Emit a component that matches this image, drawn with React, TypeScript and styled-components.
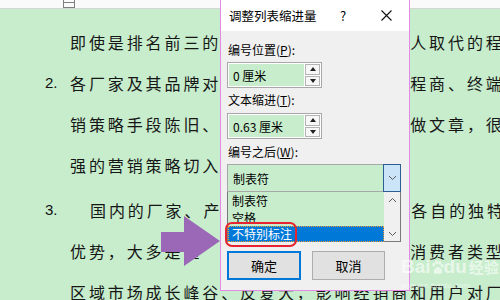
import React from 'react';
import styled, { createGlobalStyle } from 'styled-components';

const GREEN = '#c7edcc';
const UI_FONT = `"Noto Sans CJK SC", "Noto Sans", sans-serif`;

const GlobalStyle = createGlobalStyle`
  html, body {
    margin: 0;
    padding: 0;
  }
  body {
    width: 500px;
    height: 300px;
    overflow: hidden;
    background: ${GREEN};
  }
`;

// each document line: [visible left, part behind the dialog, visible right]
type DocLine = { num: string; marker: number; parts: [string, string, string]; gap?: number };

const docLines: DocLine[] = [
  { num: '', marker: 25, parts: ['即使是排名前三的', '品牌，也随时可能被他', '人取代的程度'] },
  { num: '2.', marker: 25, parts: ['各厂家及其品牌对', '市场的定位不清，对工', '程商、终端用户'] },
  { num: '', marker: 25, parts: ['销策略手段陈旧、', '大多只在价格和促销上', '做文章，很'] },
  { num: '', marker: 25, parts: ['强的营销策略切入', '点。', ''] },
  { num: '3.', marker: 45, parts: ['国内的厂家、产', '品繁多，却未能发挥出', '各自的独特'], gap: 4 },
  { num: '', marker: 25, parts: ['优势，大多是重', '复建设，不针对细分市场', '消费者类型'] },
  { num: '', marker: 25, parts: ['区域市场成长峰谷、反复大，影响经销商和用户对厂家', '', ''] },
];

const Page = styled.div`
  position: relative;
  width: 500px;
  height: 300px;
  overflow: hidden;
  background: ${GREEN};
`;

const TopStrip = styled.div`
  height: 8px;
  background: #fafafa;
  border-bottom: 1px solid #d6d6d6;
  padding-left: 63px;
  display: flex;
`;

const RulerMark = styled.div`
  width: 10px;
  height: 7px;
  border: 1px solid #808080;
  border-top: none;
  display: flex;
  flex-direction: column;

  &::before {
    content: '';
    height: 2px;
    border-bottom: 1px solid #808080;
  }
`;

const Doc = styled.div`
  padding: 12px 0 0 45px;
  white-space: nowrap;
`;

const Line = styled.div<{ $gap?: number }>`
  display: flex;
  align-items: center;
  height: 41px;
  margin-top: ${(p) => p.$gap ?? 0}px;
`;

const Marker = styled.span<{ $w: number }>`
  width: ${(p) => p.$w}px;
  flex: none;
  font-family: "Liberation Sans", sans-serif;
  font-size: 15px;
  color: #111;
`;

const LineText = styled.span`
  font-family: ${UI_FONT};
  font-size: 16px;
  letter-spacing: 2.9px;
  color: #161616;
`;

const Covered = styled.span`
  visibility: hidden;
`;

const Dialog = styled.div`
  position: absolute;
  left: 220px;
  top: 0;
  width: 190px;
  height: 291px;
  box-sizing: border-box;
  border: 1px solid #e38ae6;
  border-top: none;
  background: #f0f0f0;
  font-family: ${UI_FONT};
  font-size: 12px;
  color: #000;
`;

const TitleBar = styled.div`
  height: 31px;
  background: #fff;
  display: flex;
  align-items: center;
  padding-left: 8px;
`;

const Title = styled.span`
  flex: 1;
  font-size: 12.5px;
`;

const TitleButton = styled.span<{ $w: number }>`
  width: ${(p) => p.$w}px;
  display: flex;
  justify-content: center;
  align-items: center;
  font-size: 13px;
`;

const Body = styled.div`
  padding: 9px 8px 0 6px;
  display: flex;
  flex-direction: column;
`;

const Label = styled.div<{ $mt?: number }>`
  height: 20px;
  line-height: 20px;
  margin-top: ${(p) => p.$mt ?? 0}px;
  padding-left: 1px;
`;

const Key = styled.span`
  text-decoration: underline;
`;

const SpinBox = styled.div<{ $mt: number }>`
  margin-top: ${(p) => p.$mt}px;
  width: 95px;
  height: 26px;
  box-sizing: border-box;
  border: 1px solid #a8a8a8;
  background: #fff;
  padding: 1px;
  display: flex;
`;

const Field = styled.div`
  flex: 1;
  background: ${GREEN};
  display: flex;
  align-items: center;
  padding-left: 4px;
  white-space: pre;
`;

const Spinner = styled.div`
  width: 15px;
  margin-left: 1px;
  display: flex;
  flex-direction: column;
  gap: 1px;
`;

const SpinBtn = styled.div<{ $down?: boolean }>`
  flex: 1;
  border: 1px solid #b4b4b4;
  background: #f7f7f7;
  display: flex;
  align-items: center;
  justify-content: center;

  &::after {
    content: '';
    border-left: 3px solid transparent;
    border-right: 3px solid transparent;
    ${(p) =>
      p.$down ? 'border-top: 4px solid #222;' : 'border-bottom: 4px solid #222;'}
  }
`;

const Combo = styled.div`
  margin-top: 2px;
  width: 174px;
  height: 28px;
  box-sizing: border-box;
  border: 1px solid #a8a8a8;
  background: ${GREEN};
  display: flex;
`;

const ComboText = styled.div`
  flex: 1;
  display: flex;
  align-items: center;
  padding-left: 5px;
`;

const ComboBtn = styled.div`
  width: 16px;
  background: #cce4f7;
  border: 1px solid #2a5f94;
  margin: -1px -1px -1px 0;
  display: flex;
  align-items: center;
  justify-content: center;
`;

const ListBox = styled.div`
  width: 174px;
  height: 50px;
  box-sizing: border-box;
  border: 1px solid #7a7a7a;
  border-top: none;
  background: ${GREEN};
  display: flex;
`;

const Items = styled.div`
  flex: 1;
  display: flex;
  flex-direction: column;
`;

const Item = styled.div<{ $selected?: boolean }>`
  height: ${(p) => (p.$selected ? 16 : 17)}px;
  line-height: ${(p) => (p.$selected ? 14 : 16)}px;
  padding-left: 3px;
  box-sizing: border-box;
  background: ${(p) => (p.$selected ? '#0078d7' : 'transparent')};
  color: ${(p) => (p.$selected ? '#fff' : '#000')};
  border: 1px dotted ${(p) => (p.$selected ? '#f0a030' : 'transparent')};
`;

const ScrollBar = styled.div`
  width: 16px;
  background: #f0f0f0;
  display: flex;
  flex-direction: column;
  justify-content: space-between;
  align-items: center;
  padding: 5px 0 4px;
`;

const Buttons = styled.div`
  margin-top: 9px;
  display: flex;
  gap: 11px;
`;

const PushButton = styled.div<{ $default?: boolean }>`
  width: ${(p) => (p.$default ? 74 : 73)}px;
  height: 29px;
  box-sizing: border-box;
  background: #e1e1e1;
  border: ${(p) => (p.$default ? '2px solid #0078d7' : '1px solid #adadad')};
  display: flex;
  align-items: center;
  justify-content: center;
  font-size: 13px;
`;

const Highlight = styled.div`
  position: absolute;
  left: 4px;
  top: 222px;
  width: 72px;
  height: 25px;
  box-sizing: border-box;
  border: 2.5px solid #e52630;
  border-radius: 7px;
`;

const ArrowMark = styled.svg`
  position: absolute;
  left: 158px;
  top: 212px;
`;

const Watermark = styled.div`
  position: absolute;
  left: 401px;
  top: 255px;
  display: flex;
  flex-direction: column;
  color: rgba(255, 255, 255, 0.6);
  font-family: "Liberation Sans", sans-serif;
  white-space: nowrap;
  pointer-events: none;
`;

const WmLogo = styled.div`
  display: flex;
  align-items: center;
  font-size: 19px;
  font-weight: bold;
  line-height: 24px;
`;

const WmCn = styled.span`
  font-family: ${UI_FONT};
  font-size: 15px;
  margin-left: 2px;
`;

const WmUrl = styled.div`
  font-size: 8px;
  letter-spacing: 0.3px;
  margin-top: 2px;
`;

const Chevron = ({ up }: { up?: boolean }) => (
  <svg width="9" height="6" viewBox="0 0 9 6">
    <path
      d={up ? 'M1 5 L4.5 1.5 L8 5' : 'M1 1 L4.5 4.5 L8 1'}
      fill="none"
      stroke="#5a5a5a"
      strokeWidth="1"
    />
  </svg>
);

const Paw = () => (
  <svg width="13" height="15" viewBox="0 0 14 16">
    <g fill="rgba(255,255,255,0.6)">
      <ellipse cx="3" cy="5" rx="1.6" ry="2.2" />
      <ellipse cx="6" cy="2.5" rx="1.6" ry="2.2" />
      <ellipse cx="9.5" cy="3" rx="1.6" ry="2.2" />
      <ellipse cx="12" cy="6" rx="1.5" ry="2" />
      <path d="M3 13 C3 9 6 7.5 7.5 7.5 C9 7.5 12 9 12 13 C12 15 9.5 15 7.5 14.5 C5.5 15 3 15 3 13 Z" />
    </g>
  </svg>
);

export default function App() {
  return (
    <Page>
      <GlobalStyle />
      <TopStrip>
        <RulerMark />
      </TopStrip>
      <Doc>
        {docLines.map((l, i) => (
          <Line key={i} $gap={l.gap}>
            <Marker $w={l.marker}>{l.num}</Marker>
            <LineText>
              {l.parts[0]}
              <Covered>{l.parts[1]}</Covered>
              {l.parts[2]}
            </LineText>
          </Line>
        ))}
      </Doc>

      <Dialog>
        <TitleBar>
          <Title>调整列表缩进量</Title>
          <TitleButton $w={40}>?</TitleButton>
          <TitleButton $w={46}>
            <svg width="11" height="11" viewBox="0 0 11 11">
              <path d="M0.5 0.5 L10.5 10.5 M10.5 0.5 L0.5 10.5" stroke="#111" strokeWidth="1.1" />
            </svg>
          </TitleButton>
        </TitleBar>
        <Body>
          <Label>
            编号位置(<Key>P</Key>):
          </Label>
          <SpinBox $mt={2}>
            <Field>0 厘米</Field>
            <Spinner>
              <SpinBtn />
              <SpinBtn $down />
            </Spinner>
          </SpinBox>
          <Label $mt={2}>
            文本缩进(<Key>T</Key>):
          </Label>
          <SpinBox $mt={3}>
            <Field>0.63 厘米</Field>
            <Spinner>
              <SpinBtn />
              <SpinBtn $down />
            </Spinner>
          </SpinBox>
          <Label $mt={3}>
            编号之后(<Key>W</Key>):
          </Label>
          <Combo>
            <ComboText>制表符</ComboText>
            <ComboBtn>
              <Chevron />
            </ComboBtn>
          </Combo>
          <ListBox>
            <Items>
              <Item>制表符</Item>
              <Item>空格</Item>
              <Item $selected>不特别标注</Item>
            </Items>
            <ScrollBar>
              <Chevron up />
              <Chevron />
            </ScrollBar>
          </ListBox>
          <Buttons>
            <PushButton $default>确定</PushButton>
            <PushButton>取消</PushButton>
          </Buttons>
        </Body>
        <Highlight />
      </Dialog>

      <ArrowMark width="66" height="56" viewBox="0 0 66 56">
        <polygon points="3,20 26,20 26,4 62,29 26,54 26,40 3,40" fill="#9b68b8" />
      </ArrowMark>

      <Watermark>
        <WmLogo>
          <span>Bai</span>
          <Paw />
          <span>du</span>
          <WmCn>经验</WmCn>
        </WmLogo>
        <WmUrl>jingyan.baidu.com</WmUrl>
      </Watermark>
    </Page>
  );
}
